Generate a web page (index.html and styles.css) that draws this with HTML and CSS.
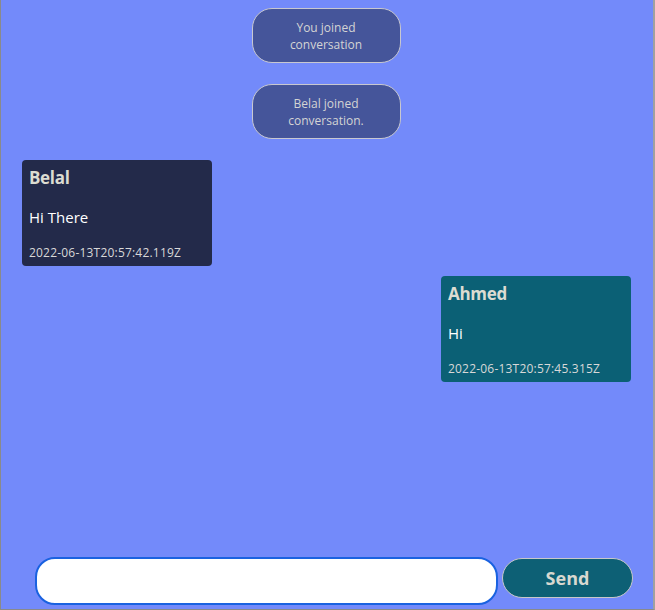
FILE: index.html
```html
<!DOCTYPE html>
<html>
<head>
<meta charset="utf-8">
<link rel="stylesheet" href="styles.css">
</head>
<body>
<div class="app">
  <div class="messages">
    <div class="system">You joined conversation</div>
    <div class="system">Belal joined conversation.</div>
    <div class="card card-left">
      <div class="name">Belal</div>
      <div class="text">Hi There</div>
      <div class="date">2022-06-13T20:57:42.119Z</div>
    </div>
    <div class="card card-right">
      <div class="name">Ahmed</div>
      <div class="text">Hi</div>
      <div class="date">2022-06-13T20:57:45.315Z</div>
    </div>
  </div>
  <div class="composer">
    <input class="input" type="text" autofocus>
    <button class="send">Send</button>
  </div>
</div>
</body>
</html>
```
FILE: styles.css
```css
html, body {
  margin: 0;
  padding: 0;
}
body {
  width: 655px;
  height: 610px;
  overflow: hidden;
  font-family: "Open Sans", "Noto Sans", sans-serif;
}
.app {
  box-sizing: border-box;
  width: 655px;
  height: 610px;
  background: #738afa;
  border-left: 1px solid #8a8a8a;
  border-right: 2px solid #a0a0a0;
  border-bottom: 1px solid #8a8a8a;
  display: flex;
  flex-direction: column;
}
.messages {
  flex: 1;
  display: flex;
  flex-direction: column;
  padding-top: 8px;
}
.system {
  box-sizing: border-box;
  align-self: center;
  width: 149px;
  height: 55px;
  margin-bottom: 21px;
  margin-right: 2px;
  padding: 1px 26px 0;
  background: #45559a;
  border: 1px solid #c8c8d0;
  border-radius: 20px;
  color: #d4d4d4;
  font-size: 12px;
  line-height: 17px;
  text-align: center;
  display: flex;
  align-items: center;
  justify-content: center;
}
.card {
  box-sizing: border-box;
  width: 190px;
  height: 106px;
  border-radius: 4px;
  padding: 6px 7px 0;
  display: flex;
  flex-direction: column;
}
.card-left {
  align-self: flex-start;
  margin-left: 21px;
  background: #232a4a;
}
.card-right {
  align-self: flex-end;
  margin-right: 22px;
  margin-top: 10px;
  background: #0b6075;
}
.name {
  color: #dcdcd2;
  font-weight: 700;
  font-size: 17px;
  line-height: 24px;
  letter-spacing: -0.3px;
}
.text {
  color: #ffffff;
  font-size: 15px;
  line-height: 20px;
  margin-top: 17px;
}
.date {
  color: #d8d8d8;
  font-size: 12px;
  line-height: 16px;
  margin-top: 18px;
  letter-spacing: 0.2px;
}
.composer {
  display: flex;
  align-items: flex-start;
  padding: 0 0 4px 34px;
  gap: 4px;
}
.input {
  box-sizing: border-box;
  width: 463px;
  height: 48px;
  border: 2px solid #1a62e0;
  border-radius: 20px;
  background: #ffffff;
  outline: none;
  padding: 0 0 0 2px;
  font-size: 16px;
  font-family: "Open Sans", sans-serif;
}
.send {
  box-sizing: border-box;
  width: 131px;
  height: 40px;
  margin-top: 1px;
  background: #0d6075;
  border: 1px solid #c8c8c8;
  border-radius: 20px;
  color: #d8d8d0;
  font-family: "Open Sans", sans-serif;
  font-weight: 700;
  font-size: 18px;
  cursor: pointer;
}
```
